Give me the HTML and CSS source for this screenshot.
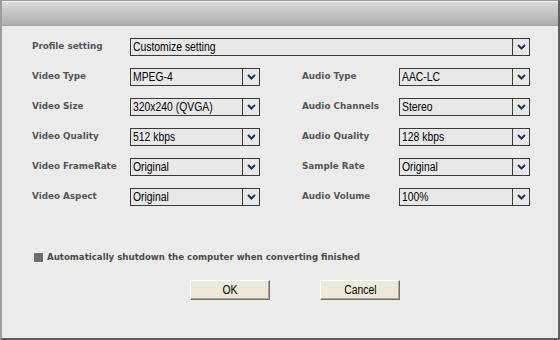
FILE: index.html
```html
<!DOCTYPE html>
<html>
<head>
<meta charset="utf-8">
<link rel="stylesheet" href="styles.css">
</head>
<body>
<div class="window">
  <div class="titlebar"></div>
  <div class="content">
    <div class="form">
      <div class="label">Profile setting</div>
      <div class="combo wide"><span class="val"><span class="txt">Customize setting</span></span><span class="arrow"><svg width="9" height="6" viewBox="0 0 9 6"><polyline points="1.5,1.5 5,5 8.5,1.5" fill="none" stroke="#ffffff" stroke-width="1.6"/><polyline points="1,1 4.5,4.5 8,1" fill="none" stroke="#1b3352" stroke-width="2"/></svg></span></div>

      <div class="label">Video Type</div>
      <div class="combo"><span class="val"><span class="txt">MPEG-4</span></span><span class="arrow"><svg width="9" height="6" viewBox="0 0 9 6"><polyline points="1.5,1.5 5,5 8.5,1.5" fill="none" stroke="#ffffff" stroke-width="1.6"/><polyline points="1,1 4.5,4.5 8,1" fill="none" stroke="#1b3352" stroke-width="2"/></svg></span></div>
      <div></div>
      <div class="label">Audio Type</div>
      <div class="combo"><span class="val"><span class="txt">AAC-LC</span></span><span class="arrow"><svg width="9" height="6" viewBox="0 0 9 6"><polyline points="1.5,1.5 5,5 8.5,1.5" fill="none" stroke="#ffffff" stroke-width="1.6"/><polyline points="1,1 4.5,4.5 8,1" fill="none" stroke="#1b3352" stroke-width="2"/></svg></span></div>

      <div class="label">Video Size</div>
      <div class="combo"><span class="val"><span class="txt">320x240 (QVGA)</span></span><span class="arrow"><svg width="9" height="6" viewBox="0 0 9 6"><polyline points="1.5,1.5 5,5 8.5,1.5" fill="none" stroke="#ffffff" stroke-width="1.6"/><polyline points="1,1 4.5,4.5 8,1" fill="none" stroke="#1b3352" stroke-width="2"/></svg></span></div>
      <div></div>
      <div class="label">Audio Channels</div>
      <div class="combo"><span class="val"><span class="txt">Stereo</span></span><span class="arrow"><svg width="9" height="6" viewBox="0 0 9 6"><polyline points="1.5,1.5 5,5 8.5,1.5" fill="none" stroke="#ffffff" stroke-width="1.6"/><polyline points="1,1 4.5,4.5 8,1" fill="none" stroke="#1b3352" stroke-width="2"/></svg></span></div>

      <div class="label">Video Quality</div>
      <div class="combo"><span class="val"><span class="txt">512 kbps</span></span><span class="arrow"><svg width="9" height="6" viewBox="0 0 9 6"><polyline points="1.5,1.5 5,5 8.5,1.5" fill="none" stroke="#ffffff" stroke-width="1.6"/><polyline points="1,1 4.5,4.5 8,1" fill="none" stroke="#1b3352" stroke-width="2"/></svg></span></div>
      <div></div>
      <div class="label">Audio Quality</div>
      <div class="combo"><span class="val"><span class="txt">128 kbps</span></span><span class="arrow"><svg width="9" height="6" viewBox="0 0 9 6"><polyline points="1.5,1.5 5,5 8.5,1.5" fill="none" stroke="#ffffff" stroke-width="1.6"/><polyline points="1,1 4.5,4.5 8,1" fill="none" stroke="#1b3352" stroke-width="2"/></svg></span></div>

      <div class="label">Video FrameRate</div>
      <div class="combo"><span class="val"><span class="txt">Original</span></span><span class="arrow"><svg width="9" height="6" viewBox="0 0 9 6"><polyline points="1.5,1.5 5,5 8.5,1.5" fill="none" stroke="#ffffff" stroke-width="1.6"/><polyline points="1,1 4.5,4.5 8,1" fill="none" stroke="#1b3352" stroke-width="2"/></svg></span></div>
      <div></div>
      <div class="label">Sample Rate</div>
      <div class="combo"><span class="val"><span class="txt">Original</span></span><span class="arrow"><svg width="9" height="6" viewBox="0 0 9 6"><polyline points="1.5,1.5 5,5 8.5,1.5" fill="none" stroke="#ffffff" stroke-width="1.6"/><polyline points="1,1 4.5,4.5 8,1" fill="none" stroke="#1b3352" stroke-width="2"/></svg></span></div>

      <div class="label">Video Aspect</div>
      <div class="combo"><span class="val"><span class="txt">Original</span></span><span class="arrow"><svg width="9" height="6" viewBox="0 0 9 6"><polyline points="1.5,1.5 5,5 8.5,1.5" fill="none" stroke="#ffffff" stroke-width="1.6"/><polyline points="1,1 4.5,4.5 8,1" fill="none" stroke="#1b3352" stroke-width="2"/></svg></span></div>
      <div></div>
      <div class="label">Audio Volume</div>
      <div class="combo"><span class="val"><span class="txt">100%</span></span><span class="arrow"><svg width="9" height="6" viewBox="0 0 9 6"><polyline points="1.5,1.5 5,5 8.5,1.5" fill="none" stroke="#ffffff" stroke-width="1.6"/><polyline points="1,1 4.5,4.5 8,1" fill="none" stroke="#1b3352" stroke-width="2"/></svg></span></div>
    </div>

    <div class="check-row">
      <span class="checkbox"></span>
      <span class="check-label">Automatically shutdown the computer when converting finished</span>
    </div>

    <div class="buttons">
      <div class="btn"><span class="txt">OK</span></div>
      <div class="btn"><span class="txt">Cancel</span></div>
    </div>
  </div>
</div>
</body>
</html>
```
FILE: styles.css
```css
html, body {
  margin: 0;
  padding: 0;
  background: #ebebeb;
}

.window {
  box-sizing: border-box;
  width: 560px;
  height: 340px;
  background: #ebebeb;
  border-top: 1px solid #9a9a9a;
  border-left: 2px solid #9c9c9c;
  border-right: 2px solid #5e5e5e;
  border-bottom: 2px solid #5e5e5e;
  display: flex;
  flex-direction: column;
}

.titlebar {
  height: 23px;
  border-top: 1px solid #f2f2f2;
  border-bottom: 1px solid #a6a6a6;
  background: linear-gradient(#dadada, #adadad);
  flex: none;
}

.content {
  padding: 12px 0 0 30px;
}

.form {
  display: grid;
  grid-template-columns: 98px 130px 42px 97px 131px;
  grid-auto-rows: 18px;
  row-gap: 12px;
}

.label {
  font-family: "DejaVu Sans", Verdana, sans-serif;
  font-weight: bold;
  font-size: 8.8px;
  color: #555555;
  align-self: center;
  white-space: nowrap;
  margin-top: -2px;
}

.combo {
  box-sizing: border-box;
  height: 18px;
  border: 1px solid #3a3a3a;
  background: #e8e8e8;
  display: flex;
  align-items: stretch;
}

.combo.wide {
  grid-column: 2 / 6;
}

.val {
  flex: 1;
  padding-left: 2px;
  font-family: "Liberation Sans", Arial, sans-serif;
  font-size: 12.5px;
  line-height: 16px;
  color: #000;
  white-space: nowrap;
  overflow: hidden;
}

.txt {
  display: inline-block;
  transform: scaleX(0.83);
  transform-origin: left center;
}

.arrow {
  width: 16px;
  border-left: 1px solid #3a3a3a;
  display: flex;
  align-items: center;
  justify-content: center;
}

.arrow svg {
  display: block;
  margin-left: 1px;
}

.check-row {
  margin-top: 45px;
  margin-left: 1px;
  display: flex;
  align-items: center;
  gap: 3px;
  height: 12px;
}

.checkbox {
  box-sizing: border-box;
  width: 11px;
  height: 11px;
  background: #6e6e6e;
  border: 1px solid #f6f6f6;
}

.check-label {
  font-family: "DejaVu Sans", Verdana, sans-serif;
  font-weight: bold;
  font-size: 8.65px;
  color: #4a4a4a;
  white-space: nowrap;
}

.buttons {
  margin-top: 17px;
  padding-left: 158px;
  display: flex;
  gap: 50px;
}

.btn {
  box-sizing: border-box;
  width: 80px;
  height: 20px;
  background: #ece9d8;
  border-top: 1px solid #ffffff;
  border-left: 1px solid #ffffff;
  border-right: 1px solid #716f64;
  border-bottom: 1px solid #716f64;
  box-shadow: inset -1px -1px 0 #aca899;
  font-family: "Liberation Sans", Arial, sans-serif;
  font-size: 12.5px;
  line-height: 18px;
  text-align: center;
  color: #000;
}

.btn .txt {
  transform-origin: center center;
}
```
